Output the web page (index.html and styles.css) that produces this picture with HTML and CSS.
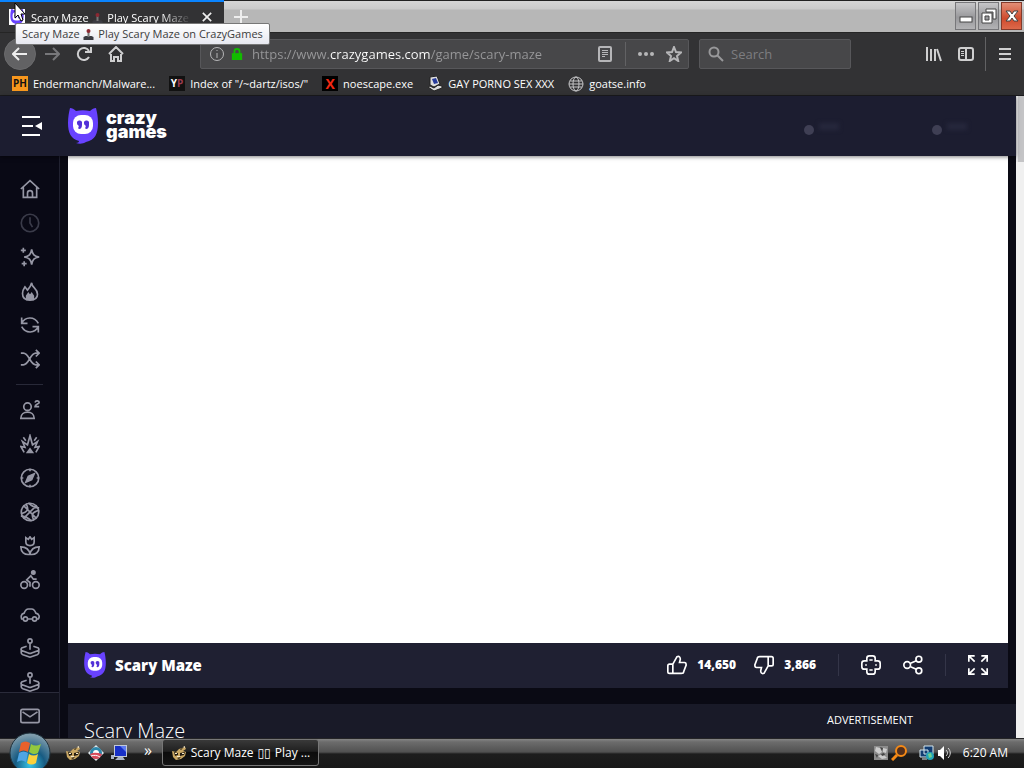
FILE: index.html
```html
<!DOCTYPE html>
<html lang="en">
<head>
    <meta charset="UTF-8">
    <meta name="viewport" content="width=device-width, initial-scale=1.0">
    <title>Scary Maze - Play Scary Maze on CrazyGames</title>
    <link rel="stylesheet" href="styles.css">
</head>
<body>

<!-- shared icons -->
<svg class="sprite" aria-hidden="true">
    <symbol id="logo" viewBox="0 0 30 36">
        <path fill="#6842ff" d="M2 0c2 0 4 1 6 3 5-1 9-1 14 0 2-2 4-3 6-3 1 4 2 9 2 15 0 11-3 17-12 19-3 2-7 2-10 1 2 0 3-1 3-2C3 31 0 25 0 15 0 9 1 4 2 0z"/>
        <rect x="5" y="7" width="20" height="19" rx="8" fill="#fff"/>
        <path fill="#5231d8" d="M9 14c1-2 4-2 5 0v3c0 4-3 5-4 3 1-1 1-2 0-3-1 0-1-2-1-3zM16 14c1-2 4-2 5 0v3c0 4-3 5-4 3 1-1 1-2 0-3-1 0-1-2-1-3z"/>
    </symbol>
    <symbol id="joystick" viewBox="0 0 24 24">
        <circle cx="12" cy="3.500" r="2.500"/>
        <path d="M12 6v8M8 10l-6 2c-1 1-1 2 0 3l8 3c1 .5 3 .5 4 0l8-3c1-1 1-2 0-3l-6-2M1.500 13v5c0 1 1 1.500 2 2l7 2.500c1 .5 2 .5 3 0l7-2.500c1-.5 2-1 2-2v-5"/>
    </symbol>
    <symbol id="emoji" viewBox="0 0 12 12">
        <path fill="#3b3b42" d="M1 9l2-1h6l2 1v3H1z"/>
        <path fill="#777" d="M5 4h2v5H5z"/>
        <circle cx="6" cy="3" r="2" fill="#8b2832"/>
    </symbol>
    <symbol id="bee" viewBox="0 0 16 16">
        <path fill="#c9a763" d="M1 6l4 1 3-3 6-2 1 2-3 2 3 1-1 4-4 3-5 1-3-3z"/>
        <path fill="#211a10" d="M3 7l4 1v2l-3 1zM9 8l5-1-1 3-4 1zM9 4l3-1-2 2zM6 13l4-1-2 2z"/>
        <path fill="#f7eacb" d="M6 11h3v1H6zM4 8h2v1H4zM11 8h2v1h-2zM12 2l2-1v2z"/>
    </symbol>
</svg>

<div class="browser">
    <div class="tab-strip">
        <div class="tab">
            <svg class="tab-icon" viewBox="0 0 16 16"><rect width="16" height="16" fill="#fff"/><use href="#logo" width="16" height="16"/></svg>
            <span class="tab-title">Scary Maze <svg class="emoji"><use href="#emoji"/></svg> Play Scary Maze</span>
            <button class="tab-close" aria-label="Close tab"><svg viewBox="0 0 12 12"><path d="M1 1l10 10M11 1L1 11"/></svg></button>
        </div>
        <button class="new-tab" aria-label="New tab"><svg viewBox="0 0 14 14"><path d="M7 0v14M0 7h14"/></svg></button>
        <div class="window-buttons">
            <button aria-label="Minimize"><svg viewBox="0 0 16 16"><rect x="2" y="9" width="12" height="5"/></svg></button>
            <button aria-label="Restore"><svg viewBox="0 0 16 16"><path d="M5 1h10v10h-3V4H5z"/><path fill-rule="evenodd" d="M1 5h10v10H1zM4 8v4h4V8z"/></svg></button>
            <button class="close" aria-label="Close"><svg viewBox="0 0 16 16"><path d="M2 3h4l2 3 2-3h4l-4 5 4 5h-4l-2-3-2 3H2l4-5z"/></svg></button>
        </div>
        <div class="tooltip" role="tooltip">Scary Maze <svg class="emoji"><use href="#emoji"/></svg> Play Scary Maze on CrazyGames</div>
        <svg class="cursor" viewBox="0 0 12 20"><path d="M1 1v15l3-3 3 6 2-1-2-6h4z"/></svg>
    </div>

    <div class="nav-bar">
        <button class="nav-button back" aria-label="Back"><svg viewBox="0 0 16 16"><path d="M15 8H1M7 2L1 8l6 6"/></svg></button>
        <button class="nav-button forward" aria-label="Forward"><svg viewBox="0 0 16 16"><path d="M1 8h14M9 2l6 6-6 6"/></svg></button>
        <button class="nav-button" aria-label="Reload"><svg viewBox="0 0 16 16"><path d="M13 11a6 6 0 1 1 0-6"/><path d="M9 6h6V1" /></svg></button>
        <button class="nav-button" aria-label="Home"><svg viewBox="0 0 16 16"><path d="M1 8l7-7 7 7M3 8v7h3v-4h4v4h3V8"/></svg></button>
        <div class="url-box">
            <svg class="small" viewBox="0 0 16 16"><circle cx="8" cy="8" r="6.500"/><path d="M8 7v5M8 4v1"/></svg>
            <svg class="lock" viewBox="0 0 14 16"><path fill="#12bc00" d="M1 7h12v8H1z"/><path fill="none" stroke="#12bc00" stroke-width="2" d="M4 8V5a3 3 0 0 1 6 0v3"/></svg>
            <input class="url" type="text" aria-label="Address" value="https://www.crazygames.com/game/scary-maze">
            <button aria-label="Reader view"><svg viewBox="0 0 16 16"><rect x="2" y="1" width="12" height="14" rx="1"/><path stroke-width="1" d="M5 4.500h6M5 6.500h6M5 8.500h6M5 10.500h3"/></svg></button>
            <span class="url-divider"></span>
            <button aria-label="Page actions"><svg viewBox="0 0 16 16"><g fill="currentColor" stroke="none"><circle cx="2" cy="8" r="2"/><circle cx="8" cy="8" r="2"/><circle cx="14" cy="8" r="2"/></g></svg></button>
            <button aria-label="Bookmark"><svg viewBox="0 0 16 16"><path d="M8 1l2 5 5 .5-4 3.500 1.200 5L8 12.200 3.800 15 5 10 1 6.500 6 6z"/></svg></button>
        </div>
        <div class="search-box">
            <svg viewBox="0 0 16 16"><circle cx="6" cy="6" r="4.500"/><path d="M9 9l6 6"/></svg>
            <input type="search" aria-label="Search" placeholder="Search">
        </div>
        <div class="toolbar-end">
            <button aria-label="Library"><svg viewBox="0 0 16 16"><path d="M1 1v14M5 3v12M9 3v12M11 3l4 12"/></svg></button>
            <button aria-label="Sidebars"><svg viewBox="0 0 16 16"><rect x="1" y="2" width="14" height="12" rx="2"/><path d="M8 2v12"/><path stroke-width="1" d="M3 5.500h3M3 7.500h3M3 9.500h3"/></svg></button>
            <span class="toolbar-divider"></span>
            <button aria-label="Menu"><svg viewBox="0 0 16 16"><path d="M2 3h12M2 8h12M2 13h12"/></svg></button>
        </div>
    </div>

    <div class="bookmarks">
        <a href="#"><span class="badge ph">PH</span>Endermanch/Malware...</a>
        <a href="#"><span class="badge yp">Y<i>P</i></span>Index of "/~dartz/isos/"</a>
        <a href="#"><span class="badge ex">X</span>noescape.exe</a>
        <a href="#"><svg viewBox="0 0 16 16"><path fill="#ddd" stroke="#222" d="M3 1l7-1 3 8-6 3-4-2zM1 11l6 4 8-3v-2l-4-1-4 3-4-2z"/><path fill="#283c9b" d="M5 3l4-1 2 5-4 1z"/></svg>GAY PORNO SEX XXX</a>
        <a href="#"><svg class="globe" viewBox="0 0 16 16"><circle cx="8" cy="8" r="7"/><ellipse cx="8" cy="8" rx="3" ry="7"/><path d="M1 8h14M2 5h12M2 11h12"/></svg>goatse.info</a>
    </div>
</div>

<div class="viewport">
    <div class="site">
        <header class="site-header">
            <button class="menu-toggle" aria-label="Toggle menu"><svg viewBox="0 0 22 22"><path d="M1 2h18M1 11h11M1 20h18"/><path class="solid" d="M21 7v8l-7-4z"/></svg></button>
            <a class="brand" href="#"><svg><use href="#logo"/></svg><span>crazy<br>games</span></a>
            <div class="header-dots"><span></span><span></span></div>
        </header>

        <div class="site-body">
            <aside class="sidebar">
                <nav>
                    <a href="#" aria-label="Home"><svg viewBox="0 0 24 24"><path d="M1 12L12 2l11 10M4 10v12h16V10M9 22v-5a3 3 0 0 1 6 0v5"/></svg></a>
                    <a class="faded" href="#" aria-label="Recent"><svg viewBox="0 0 24 24"><circle cx="12" cy="12" r="10.500"/><path d="M12 5v7l3 5"/></svg></a>
                    <a href="#" aria-label="New"><svg viewBox="0 0 24 24"><path d="M14 3c1 6 3 8 9 9-6 1-8 3-9 9-1-6-3-8-9-9 6-1 8-3 9-9zM4 1v6M1 4h6M5 17v6M2 20h6"/></svg></a>
                    <a href="#" aria-label="Trending"><svg viewBox="0 0 24 24"><path d="M14 2c0 3 1 4 3 6 3 3 4 5 4 8 0 4-3 7-9 7s-9-3-9-8c0-3 1-5 3-8l3 4c3-3 4-5 5-9z"/><path class="solid" d="M8 22v-4l2-3 2 3 2-3 2 3v4z"/></svg></a>
                    <a href="#" aria-label="Updated"><svg viewBox="0 0 24 24"><path d="M2 3v7h7M2 10c4-8 15-9 20 0M22 21v-7h-7M22 14c-4 8-15 9-20 0"/></svg></a>
                    <a href="#" aria-label="Random"><svg viewBox="0 0 24 24"><path d="M1 5h3c7 0 8 14 15 14h4M19 15l4 4-4 4M1 19h3c7 0 8-14 15-14h4M19 1l4 4-4 4"/></svg></a>
                    <hr>
                    <a href="#" aria-label="2 player"><svg viewBox="0 0 24 24"><circle cx="9" cy="8" r="4.500"/><path d="M1 22c0-10 16-10 16 0zM18 3c1-3 5-2 5 0s-5 2-5 5h5"/></svg></a>
                    <a href="#" aria-label="Action"><svg viewBox="0 0 24 24"><path d="M5 22L1 15l5 1-3-7 6 4 3-11 3 11 6-4-3 7 5-1-4 7M4 4l3 4M20 4l-3 4"/><path class="solid" d="M9 22l3-4 3 4z"/></svg></a>
                    <a href="#" aria-label="Adventure"><svg viewBox="0 0 24 24"><circle cx="12" cy="12" r="10.500"/><path class="solid" d="M17 7l-3 7-7 3 3-7z"/><path d="M12 1v3M12 20v3M1 12h3M20 12h3"/></svg></a>
                    <a href="#" aria-label="Basketball"><svg viewBox="0 0 24 24"><circle cx="12" cy="12" r="10.500"/><path d="M4 4l16 16M20 4L4 20M7 2c4 6 3 10-6 12M17 22c-4-6-3-10 6-12M10 1c4 4 8 6 13 6M14 23c-4-4-8-6-13-6"/></svg></a>
                    <a href="#" aria-label="Beauty"><svg viewBox="0 0 24 24"><path d="M7 2l3 2 2-3 2 3 3-2v5c0 6-10 6-10 0zM12 22C5 23 1 19 1 13c6 0 10 3 11 9zM12 22c7 1 11-3 11-9-6 0-10 3-11 9z"/></svg></a>
                    <a href="#" aria-label="Bike"><svg viewBox="0 0 24 24"><circle cx="5" cy="18" r="4"/><circle cx="19" cy="18" r="4"/><circle class="solid" cx="16" cy="3" r="2"/><path d="M12 20v-5l-4-3 5-5 3 4h4"/></svg></a>
                    <a href="#" aria-label="Car"><svg viewBox="0 0 24 24"><path d="M4 18H2c-1-3-1-6 3-7 1-3 3-5 5-5h4c2 0 4 2 5 5 4 1 5 4 3 7h-2M9 18h6"/><circle cx="6.500" cy="18" r="2.500"/><circle cx="17.500" cy="18" r="2.500"/></svg></a>
                    <a href="#" aria-label="Casual"><svg><use href="#joystick"/></svg></a>
                    <a href="#" aria-label="Clicker"><svg><use href="#joystick"/></svg></a>
                </nav>
                <a class="contact" href="#" aria-label="Contact us"><svg viewBox="0 0 24 24"><rect x="1" y="4" width="22" height="16" rx="2"/><path d="M3 7l9 6 9-6"/></svg></a>
            </aside>

            <main>
                <div class="game-stage"></div>
                <div class="game-bar">
                    <svg class="game-logo"><use href="#logo"/></svg>
                    <h1>Scary Maze</h1>
                    <div class="game-actions">
                        <div class="votes">
                            <button><svg viewBox="0 0 24 24"><path d="M7 11H3c-1 0-2 1-2 2v7c0 1 1 2 2 2h4zM7 11l5-9c3-1 4 1 4 3l-1 4h6c2 0 2 2 2 3l-3 8c0 1-1 2-3 2H7"/></svg>14,650</button>
                            <button><svg viewBox="0 0 24 24"><path d="M17 13h4c1 0 2-1 2-2V4c0-1-1-2-2-2h-4zM17 13l-5 9c-3 1-4-1-4-3l1-4H3c-2 0-2-2-2-3l3-8c0-1 1-2 3-2h10"/></svg>3,866</button>
                        </div>
                        <span class="divider"></span>
                        <button aria-label="Controls"><svg viewBox="0 0 24 24"><path d="M7 7V4c0-2 1-3 3-3h4c2 0 3 1 3 3v3h3c2 0 3 1 3 3v4c0 2-1 3-3 3h-3v3c0 2-1 3-3 3h-4c-2 0-3-1-3-3v-3H4c-2 0-3-1-3-3v-4c0-2 1-3 3-3zM10 6h4M10 18h4M6 11v2M18 11v2"/></svg></button>
                        <button aria-label="Share"><svg viewBox="0 0 24 24"><circle cx="5" cy="12" r="4"/><circle cx="19" cy="5" r="3.500"/><circle cx="19" cy="19" r="3.500"/><path d="M9 10l7-3M9 14l7 3"/></svg></button>
                        <span class="divider"></span>
                        <button aria-label="Fullscreen"><svg viewBox="0 0 24 24"><path d="M1 8V1h7M1 1l7 7M16 1h7v7M23 1l-7 7M1 16v7h7M1 23l7-7M23 16v7h-7M23 23l-7-7"/></svg></button>
                    </div>
                </div>
                <section class="game-info">
                    <h2>Scary Maze</h2>
                    <div class="ad-label">ADVERTISEMENT</div>
                </section>
            </main>
        </div>
    </div>
    <div class="scrollbar"><div class="scroll-thumb"></div></div>
</div>

<div class="taskbar">
    <button class="start" aria-label="Start">
        <svg viewBox="0 0 42 42">
            <defs>
                <radialGradient id="orb" cx="50%" cy="80%" r="75%"><stop offset="0" stop-color="#35c4e8"/><stop offset=".5" stop-color="#175b82"/><stop offset="1" stop-color="#7f9cac"/></radialGradient>
            </defs>
            <circle cx="21" cy="21" r="20" fill="url(#orb)" stroke="#20333e"/>
            <path fill="#e9612b" d="M12 11c3-2 6-2 9 0l-2 9c-3-2-6-2-9 0z"/>
            <path fill="#92c83e" d="M22 12c3 2 6 2 10 0l-3 9c-3 2-6 1-9-1z"/>
            <path fill="#4fa5e4" d="M10 21c3-2 6-2 9 0l-2 9c-3-2-6-2-9 0z"/>
            <path fill="#fbd13b" d="M20 22c3 2 6 2 9 0l-2 9c-3 2-6 2-9 0z"/>
        </svg>
    </button>
    <div class="quick-launch">
        <button aria-label="Browser"><svg><use href="#bee"/></svg></button>
        <button aria-label="Media"><svg viewBox="0 0 16 16"><path fill="#dfe9ee" d="M8 0l8 8-8 8-8-8z"/><circle cx="8" cy="8" r="6" fill="#2d87ab"/><circle cx="8" cy="8" r="3" fill="#fff"/><path fill="#d84b5b" d="M2 9c4-2 8-1 12 0-1 3-3 5-6 5s-5-2-6-5z"/><path fill="none" stroke="#fff" d="M3 11c3-1 6-1 9 1"/></svg></button>
        <button aria-label="Show desktop"><svg viewBox="0 0 16 16"><path fill="#c2c9d6" d="M3 0h13v12H3z"/><path fill="#1730c7" d="M4 1h11v10H4z"/><path fill="#5e7bf0" d="M9 1h6v6z"/><path fill="#aab4c6" d="M7 12h5l2 3H4zM0 10h3v4H0z"/></svg></button>
        <button class="more" aria-label="More">»</button>
    </div>
    <button class="task"><svg><use href="#bee"/></svg>Scary Maze <span class="box-glyph">▯▯</span> Play ...</button>
    <div class="tray">
        <svg viewBox="0 0 16 16"><path fill="#8c8c8c" d="M1 1h14v14H1z"/><path fill="#ccc" d="M3 2l4 1 2 4-3 2-4-3zM10 3l4 1-1 4-3-1zM5 11l5-2 4 4-5 1z"/><path fill="#444" d="M2 9l3 1-1 3zM7 2l3 1-1 3zM8 9l3-1 1 2-3 1z"/></svg>
        <svg viewBox="0 0 16 16"><circle cx="10" cy="6" r="5" fill="#54301c" stroke="#f58a16" stroke-width="2"/><path stroke="#f58a16" stroke-width="3" d="M6 10l-5 5"/></svg>
        <svg class="network" viewBox="0 0 16 16"><path fill="#113c72" stroke="#d5e7ee" d="M5 1h9v8H5zM1 5h8v7H1z"/><path stroke="#d5e7ee" d="M3 14h5"/><circle cx="11" cy="11" r="4" fill="#22a2b7"/><path fill="#70d08b" d="M9 9l3-1 1 4-3 1z"/></svg>
        <svg viewBox="0 0 16 16"><path fill="#fff" d="M1 5h2l4-4v14l-4-4H1z"/><path fill="none" stroke="#ddd" d="M9 5c2 2 2 4 0 6M11 3c3 3 3 7 0 10"/></svg>
        <time>6:20 AM</time>
    </div>
</div>

</body>
</html>
```
FILE: styles.css
```css
* {
    box-sizing: border-box;
}

body {
    margin: 0;
    height: 100vh;
    display: flex;
    flex-direction: column;
    overflow: hidden;
    background: #0a0a14;
    color: #fff;
    font: 12px "Open Sans", sans-serif;
}

button {
    display: flex;
    align-items: center;
    justify-content: center;
    padding: 0;
    border: none;
    background: none;
    color: inherit;
    font: inherit;
    cursor: pointer;
}

a {
    color: inherit;
    text-decoration: none;
}

input {
    min-width: 0;
    padding: 0;
    border: none;
    outline: none;
    background: none;
    font: inherit;
}

svg {
    flex-shrink: 0;
    width: 16px;
    height: 16px;
}

.sprite {
    position: absolute;
    width: 0;
    height: 0;
}

/* Browser window */
.browser {
    background: #323234;
    font-size: 11px;
    font-weight: 500;
}

.tab-strip {
    position: relative;
    display: flex;
    height: 33px;
    border-top: 1px solid #222;
    border-bottom: 1px solid #252525;
    background: linear-gradient(#d6d6d6, #cbcbcb 8px, #b7b7b7 9px, #b7b7b7);
}

.tab {
    display: flex;
    align-items: center;
    width: 224px;
    margin-top: -1px;
    padding: 0 10px 0 9px;
    border-top: 2px solid #0a84ff;
    background: #323234;
}

.tab-title {
    flex: 1;
    margin-left: 6px;
    white-space: nowrap;
    mask-image: linear-gradient(to right, #000 80%, transparent);
}

.emoji {
    width: 13px;
    height: 12px;
    vertical-align: -2px;
}

.tab-close {
    width: 14px;
    margin-left: 8px;
}

.tab-close svg,
.new-tab svg {
    width: 10px;
    height: 10px;
    fill: none;
    stroke: #eee;
    stroke-width: 2;
}

.new-tab {
    width: 34px;
}

.new-tab svg {
    width: 14px;
    height: 14px;
}

.window-buttons {
    display: flex;
    gap: 2px;
    margin-left: auto;
    padding: 1px 2px 2px;
}

.window-buttons button {
    width: 21px;
    border: 1px solid #77777a;
    background: linear-gradient(#c6c6c8, #98989b 55%, #b3b3b5);
}

.window-buttons svg {
    fill: #fff;
    stroke: #444;
}

.window-buttons .close {
    border-color: #843b2b;
    background: linear-gradient(#e28e76, #cf4b2d 60%, #dd694b);
}

.tooltip {
    position: absolute;
    z-index: 2;
    left: 15px;
    top: 22px;
    padding: 0 6px;
    border: 1px solid #777;
    border-radius: 2px;
    background: linear-gradient(#fff, #e7e8f0);
    color: #3c3c3c;
    line-height: 20px;
    white-space: nowrap;
}

.cursor {
    position: absolute;
    z-index: 3;
    left: 14px;
    top: 1px;
    width: 12px;
    height: 20px;
    fill: #fff;
    stroke: #000;
}

.nav-bar {
    display: flex;
    align-items: center;
    height: 41px;
    padding: 0 11px 0 4px;
    color: #cfcfd0;
    font-weight: 400;
}

.nav-bar svg {
    fill: none;
    stroke: currentColor;
    stroke-width: 2;
}

.nav-button {
    width: 32px;
    height: 32px;
}

.nav-button.back {
    border: 1px solid #6b6b6d;
    border-radius: 50%;
    background: #626264;
    color: #eee;
}

.nav-button.forward {
    color: #77777a;
}

.url-box,
.search-box {
    display: flex;
    align-items: center;
    height: 30px;
    border: 1px solid #57575a;
    border-radius: 2px;
    background: #474749;
}

.url-box {
    flex: 1;
    gap: 6px;
    margin-left: 68px;
    padding: 0 3px 0 8px;
    color: #b6b6b8;
}

.url-box .small {
    stroke-width: 1;
}

.url-box .lock {
    width: 12px;
    height: 16px;
    stroke: none;
}

/* the domain is brighter than the rest of the address */
.url {
    flex: 1;
    margin-left: 3px;
    background: linear-gradient(to right, #98989a 78px, #fff 78px, #fff 178px, #98989a 178px);
    background-clip: text;
    color: transparent;
    font-size: 13px;
}

.url-divider,
.toolbar-divider {
    width: 1px;
    height: 24px;
    margin: 0 3px;
    background: #626264;
}

.url-box button {
    width: 22px;
}

.search-box {
    width: 152px;
    margin-left: 10px;
    padding: 0 8px;
    gap: 7px;
    color: #98989a;
}

.search-box input {
    flex: 1;
    color: #eee;
    font-size: 13px;
}

.search-box input::placeholder {
    color: #7d7d80;
}

.toolbar-end {
    display: flex;
    align-items: center;
    gap: 16px;
    margin-left: 75px;
}

.toolbar-divider {
    height: 34px;
    margin: 0 -5px;
}

.bookmarks {
    display: flex;
    gap: 14px;
    height: 22px;
    padding: 0 12px 2px;
    border-bottom: 1px solid #1b1b1e;
}

.bookmarks a {
    display: flex;
    align-items: center;
    gap: 5px;
    white-space: nowrap;
}

.badge {
    width: 16px;
    height: 15px;
    background: #111;
    font-size: 10px;
    font-weight: 700;
    line-height: 15px;
    text-align: center;
}

.badge.ph {
    background: #f7971d;
    color: #111;
}

.badge.yp i {
    color: #9c3c50;
    font-style: normal;
}

.badge.ex {
    background: #000;
    color: #f12813;
    font-size: 14px;
}

.globe {
    fill: none;
    stroke: #c6c6c8;
}

/* Web page */
.viewport {
    flex: 1;
    display: flex;
    min-height: 0;
}

.site {
    flex: 1;
    display: flex;
    flex-direction: column;
    min-width: 0;
}

.scrollbar {
    width: 8px;
    background: #f0f0f0;
}

.scroll-thumb {
    height: 66px;
    border-left: 2px solid #e6e6e8;
    background: #c4c4c6;
}

.site-header {
    position: relative;
    z-index: 1;
    display: flex;
    align-items: center;
    height: 60px;
    padding: 0 48px 0 21px;
    background: #1c1d30;
    box-shadow: 0 1px 4px rgba(0, 0, 0, 0.5);
}

.menu-toggle svg {
    width: 22px;
    height: 22px;
    fill: none;
    stroke: #fff;
    stroke-width: 2;
}

.menu-toggle .solid {
    fill: #fff;
    stroke: none;
}

.brand {
    display: flex;
    align-items: center;
    gap: 8px;
    margin-left: 25px;
    font: 900 18px/14px Inter, sans-serif;
}

.brand svg {
    width: 30px;
    height: 36px;
}

.brand span {
    padding-bottom: 2px;
}

.header-dots {
    display: flex;
    gap: 92px;
    margin-left: auto;
    padding-top: 8px;
}

.header-dots span {
    display: flex;
    align-items: center;
    width: 36px;
}

.header-dots span::before {
    content: "";
    width: 10px;
    height: 10px;
    border-radius: 50%;
    background: #3f3f54;
}

.header-dots span::after {
    content: "";
    width: 20px;
    height: 7px;
    margin: 0 0 8px 5px;
    background: #26273c;
    filter: blur(2px);
}

.site-body {
    flex: 1;
    display: flex;
    min-height: 0;
}

.sidebar {
    display: flex;
    flex-direction: column;
    width: 60px;
    border-right: 1px solid #212231;
    background: #090915;
    color: #9697a5;
}

.sidebar svg {
    width: 20px;
    height: 20px;
    fill: none;
    stroke: currentColor;
    stroke-width: 2;
}

.sidebar .solid {
    fill: currentColor;
}

.sidebar nav {
    flex: 1;
    min-height: 0;
    padding-top: 16px;
    overflow: hidden;
}

.sidebar nav a {
    display: flex;
    align-items: center;
    justify-content: center;
    height: 34px;
}

.sidebar nav .faded {
    color: #3a3b49;
}

.sidebar hr {
    height: 1px;
    margin: 8px 16px;
    border: none;
    background: #282938;
}

.contact {
    display: flex;
    align-items: center;
    justify-content: center;
    height: 46px;
    border-top: 1px solid #2a2b3a;
    background: #10111c;
}

main {
    flex: 1;
    display: flex;
    flex-direction: column;
    min-width: 0;
    padding-left: 8px;
}

.game-stage {
    flex: 1;
    margin-right: 8px;
    background: #fff;
}

.game-bar {
    display: flex;
    align-items: center;
    height: 45px;
    margin-right: 8px;
    padding: 0 20px 2px 16px;
    background: #1f2032;
}

.game-logo {
    width: 22px;
    height: 26px;
}

.game-bar h1 {
    margin: 0 0 0 9px;
    font: 800 15px "Open Sans", sans-serif;
}

.game-actions,
.votes {
    display: flex;
    align-items: center;
}

.game-actions {
    gap: 22px;
    margin-left: auto;
    font-weight: 800;
}

.game-actions svg {
    width: 20px;
    height: 20px;
    fill: none;
    stroke: #fff;
    stroke-width: 2;
}

.votes {
    gap: 18px;
}

.votes button {
    gap: 10px;
}

.divider {
    width: 1px;
    height: 22px;
    background: #343548;
}

.game-info {
    display: flex;
    justify-content: space-between;
    height: 34px;
    margin-top: 16px;
    padding: 0 103px 0 16px;
    background: #191a28;
}

.game-info h2 {
    margin: 14px 0 0;
    font: 300 20px/26px "Open Sans", sans-serif;
}

.ad-label {
    padding-top: 8px;
    font-size: 11px;
    line-height: 16px;
}

/* Taskbar */
.taskbar {
    position: relative;
    z-index: 2;
    display: flex;
    align-items: center;
    height: 30px;
    padding: 0 16px 2px 65px;
    border-top: 1px solid #252527;
    background: linear-gradient(#858585, #6c6c6c 3px, #515151 13px, #1d1d1d 15px, #181818);
}

.start {
    position: absolute;
    left: 9px;
    top: -7px;
}

.start svg {
    width: 42px;
    height: 42px;
}

.quick-launch {
    display: flex;
    align-items: center;
    gap: 7px;
}

.quick-launch .more {
    margin: 0 0 6px 10px;
    font-size: 16px;
    line-height: 18px;
}

.task {
    width: 157px;
    height: 27px;
    margin-left: 10px;
    gap: 4px;
    border: 1px solid #777;
    border-radius: 3px;
    background: linear-gradient(#393939, #202020 45%, #0c0c0c 50%, #151515);
}

.box-glyph {
    font-family: "DejaVu Sans", sans-serif;
    font-size: 12px;
}

.tray {
    display: flex;
    align-items: center;
    gap: 2px;
    margin-left: auto;
}

.tray .network {
    margin-left: 10px;
}

.tray time {
    margin-left: 8px;
}
```
